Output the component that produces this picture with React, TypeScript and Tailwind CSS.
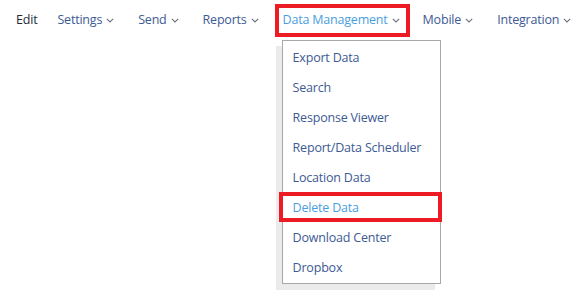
import React from "react";

const Chevron = () => (
  <svg width="8" height="5" viewBox="0 0 8 5" className="ml-[4px] mt-[1px]" fill="none">
    <path d="M0.8 0.8 L4 4 L7.2 0.8" stroke="#6b7280" strokeWidth="1.1" />
  </svg>
);

const items = [
  "Export Data",
  "Search",
  "Response Viewer",
  "Report/Data Scheduler",
  "Location Data",
  "Delete Data",
  "Download Center",
  "Dropbox",
];

export default function App() {
  return (
    <div
      className="relative w-[583px] h-[300px] bg-white overflow-hidden"
      style={{ fontFamily: '"Open Sans", "Noto Sans", sans-serif' }}
    >
      <div className="flex items-center h-[38px] pt-[2px] pl-[16px] text-[12.5px] tracking-[-0.2px] text-[#3d5a94]">
        <span className="text-[#1e2b3c] font-medium mr-[20px]">Edit</span>
        <span className="flex items-center mr-[24px]">Settings<Chevron /></span>
        <span className="flex items-center mr-[24px]">Send<Chevron /></span>
        <span className="flex items-center mr-[24px]">Reports<Chevron /></span>
        <span className="relative flex items-center mr-[23px] text-[#4a9ee0]">
          Data Management<Chevron />
          <span className="absolute left-[-8px] right-[-10px] top-[-7px] bottom-[-8px] border-[4px] border-[#ed1c24]" />
          <div className="absolute left-[-1px] top-[29px] w-[159px] border border-[#a8a8a8] bg-white py-[1px] shadow-[-6px_6px_0_#ebebeb] z-10">
            {items.map((it) => (
              <div
                key={it}
                className={`relative h-[30px] flex items-center pl-[10px] pt-[3px] ${
                  it === "Delete Data" ? "text-[#4a9ee0]" : "text-[#3d5a94]"
                }`}
              >
                {it}
                {it === "Delete Data" && (
                  <span className="absolute left-[-4px] right-[-2px] top-[0px] bottom-[0px] border-[4px] border-[#ed1c24]" />
                )}
              </div>
            ))}
          </div>
        </span>
        <span className="flex items-center mr-[24px]">Mobile<Chevron /></span>
        <span className="flex items-center">Integration<Chevron /></span>
      </div>
    </div>
  );
}
